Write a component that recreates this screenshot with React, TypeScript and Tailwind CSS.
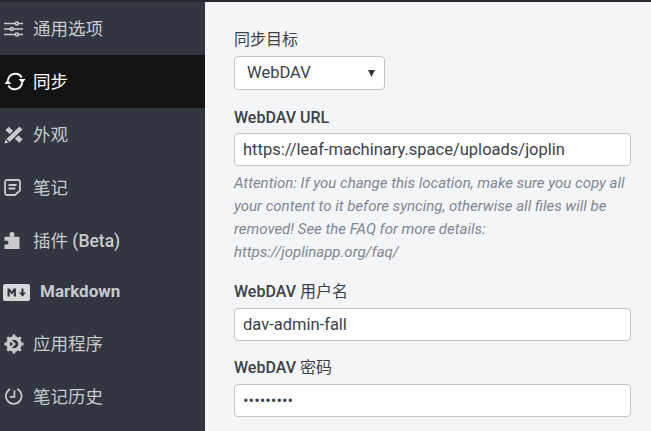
import React from "react";

const cjk = "font-['Roboto','Noto_Sans_CJK_SC',sans-serif]";

const SliderIcon = () => (
  <svg width="19" height="16" viewBox="0 0 19 16" fill="none" stroke="currentColor" strokeWidth="1.700">
    <path d="M0 2.500h11M14.500 2.500h4.500M0 8h6M9.500 8h9.500M0 13.500h11M14.500 13.500h4.500" />
    <circle cx="12.800" cy="2.500" r="1.500" />
    <circle cx="7.800" cy="8" r="1.500" />
    <circle cx="12.800" cy="13.500" r="1.500" />
  </svg>
);
const SyncIcon = () => (
  <svg width="22" height="19" viewBox="0 0 22 19" fill="none">
    <path d="M4 8A7.400 7.400 0 0 1 17.700 5.500M18 11A7.400 7.400 0 0 1 4.300 13.500" stroke="currentColor" strokeWidth="1.900" />
    <path d="M14.800 7h6.700L18.200 11.500zM0.500 12h6.700L3.800 7.500z" fill="currentColor" />
  </svg>
);
const AppearanceIcon = () => (
  <svg width="20" height="19" viewBox="0 0 20 19" fill="none">
    <path d="M3 3.500L17 16" stroke="currentColor" strokeWidth="5" />
    <path d="M17 3L4 15.500" stroke="#313640" strokeWidth="7" />
    <path d="M17 3L4 15.500" stroke="currentColor" strokeWidth="4.500" />
    <path d="M0.500 18.500l1-4 3 3z" fill="currentColor" />
  </svg>
);
const NoteIcon = () => (
  <svg width="17" height="17" viewBox="0 0 17 17" fill="none" stroke="currentColor" strokeWidth="1.800">
    <path d="M3 1h11a2 2 0 0 1 2 2v8.500L11 16H3a2 2 0 0 1-2-2V3a2 2 0 0 1 2-2z" />
    <path d="M4.500 6h8M4.500 9.500h7" />
  </svg>
);
const PuzzleIcon = () => (
  <svg width="16" height="18" viewBox="0 0 16 18" fill="currentColor">
    <path d="M5.500 2.500a2.500 2.500 0 0 1 5 0c0 1-.6 1.500-.8 2.200H15.500V17H0.500V12.500h2.200a1.800 1.800 0 0 0 0-3.800H0.500V4.700h5.800c-.2-.7-.8-1.200-.8-2.200z" />
  </svg>
);
const MdIcon = () => (
  <svg width="27" height="17" viewBox="0 0 27 17">
    <rect x="0" y="0" width="27" height="17" rx="2" fill="#d6d7d9" />
    <path d="M4.500 12.500V4.500h2.200l2 3 2-3h2.200v8h-2.200V8l-2 2.500L6.700 8v4.500z M18.500 4.500h2v4H23L19.500 12.800 16 8.500h2.500z" fill="#313640" />
  </svg>
);
const GearIcon = () => (
  <svg width="20" height="20" viewBox="0 0 20 20" fill="none">
    <circle cx="10" cy="10" r="6" stroke="currentColor" strokeWidth="3.400" />
    <path d="M10 0.500v3M10 16.500v3M0.500 10h3M16.500 10h3M3.300 3.300l2.100 2.100M14.600 14.600l2.100 2.100M3.300 16.700l2.100-2.100M14.600 5.400l2.100-2.100" stroke="currentColor" strokeWidth="2.800" />
    <path d="M6.500 6.500L10.500 10l-4 3.500" stroke="currentColor" strokeWidth="1.800" />
  </svg>
);
const HistoryIcon = () => (
  <svg className="mb-[1px]" width="19" height="18" viewBox="0 0 20 19" fill="none" stroke="currentColor" strokeWidth="1.800">
    <path d="M14 2A8.300 8.300 0 1 1 6.500 2" />
    <path d="M11 3.500v7H6" />
  </svg>
);

const items: { icon: React.ReactNode; label: React.ReactNode; key: string; active?: boolean; md?: boolean; h: string }[] = [
  { key: "a", icon: <SliderIcon />, label: "通用选项", h: "h-[53px]" },
  { key: "b", icon: <SyncIcon />, label: "同步", active: true, h: "h-[53px]" },
  { key: "c", icon: <AppearanceIcon />, label: "外观", h: "h-[53px]" },
  { key: "d", icon: <NoteIcon />, label: "笔记", h: "h-[53px]" },
  { key: "e", icon: <PuzzleIcon />, label: <>插件 <span className="font-medium">(Beta)</span></>, h: "h-[53px]" },
  { key: "f", icon: <MdIcon />, label: "Markdown", md: true, h: "h-[50px]" },
  { key: "g", icon: <GearIcon />, label: "应用程序", h: "h-[53px]" },
  { key: "h", icon: <HistoryIcon />, label: "笔记历史", h: "h-[53px]" },
];

const Field = ({ value }: { value: string }) => (
  <div className="flex h-[33px] w-[397px] items-center rounded-[4px] border border-[#c4c4c4] bg-white pl-[8px] pt-[1px] text-[16.500px] text-[#3c4148]">
    {value}
  </div>
);

export default function App() {
  return (
    <div className={`flex h-[431px] w-[651px] flex-col overflow-hidden bg-[#f4f5f6] ${cjk}`}>
      <div className="h-[2px] shrink-0 bg-[#26282d]" />
      <div className="flex min-h-0 flex-1">
        <nav className="flex w-[205px] shrink-0 flex-col bg-[#313640]">
          {items.map((it) => (
            <div
              key={it.key}
              className={`flex ${it.h} shrink-0 items-center ${it.active ? "bg-[#131313] text-white" : "text-[#c8cacd]"}`}
            >
              <span className={`flex shrink-0 items-center justify-start ${it.md ? "ml-[3px] w-[37px]" : "ml-[4px] w-[29px]"}`}>
                {it.icon}
              </span>
              <span className={it.md ? "text-[17px] font-bold" : "pt-[1px] text-[17.500px] font-normal"}>{it.label}</span>
            </div>
          ))}
        </nav>
        <main className="flex min-w-0 flex-1 flex-col pl-[29px] pt-[28px] text-[#3c4148]">
          <div className="h-[20px] text-[16px] leading-[20px]">同步目标</div>
          <div className="mt-[6px] flex h-[34px] w-[151px] items-center justify-between rounded-[4px] border border-[#c4c4c4] bg-white pl-[12px] pr-[9px] pt-[1px] text-[16.500px]">
            <span>WebDAV</span>
            <svg width="7" height="7" viewBox="0 0 7 7"><path d="M0 0h7L3.500 7z" fill="#33363b" /></svg>
          </div>
          <div className="mt-[18px] h-[20px] text-[16px] font-medium leading-[20px]">WebDAV URL</div>
          <div className="mt-[5px]"><Field value="https://leaf-machinary.space/uploads/joplin" /></div>
          <p className="mt-[6px] w-[397px] text-[15px] italic leading-[23px] text-[#7f8794]">
            Attention: If you change this location, make sure you copy all
            <br />your content to it before syncing, otherwise all files will be
            <br />removed! See the FAQ for more details:
            <br />https://joplinapp.org/faq/
          </p>
          <div className="mt-[18px] h-[20px] text-[16px] font-medium leading-[20px]">WebDAV <span className="font-normal">用户名</span></div>
          <div className="mt-[6px]"><Field value="dav-admin-fall" /></div>
          <div className="mt-[17px] h-[20px] text-[16px] font-medium leading-[20px]">WebDAV <span className="font-normal">密码</span></div>
          <div className="mt-[6px]"><Field value="•••••••••" /></div>
        </main>
      </div>
    </div>
  );
}
